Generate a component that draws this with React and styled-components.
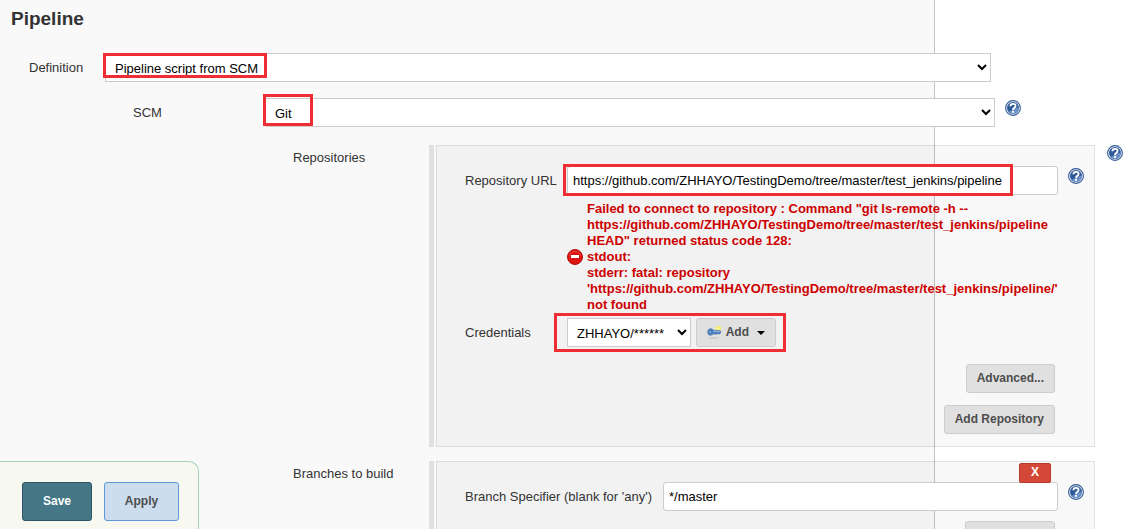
import React from 'react';
import styled, { createGlobalStyle } from 'styled-components';

const GlobalStyle = createGlobalStyle`
  *, *::before, *::after { box-sizing: border-box; }
  body {
    margin: 0;
    background: #fff;
    color: #333;
    font-family: "Liberation Sans", Arial, sans-serif;
    font-size: 13px;
    line-height: 16px;
  }
`;

const Page = styled.form`
  position: relative;
  height: 100vh;
  overflow: hidden;
  padding-top: 7px;
  background: linear-gradient(to right, #f9f9f9 calc(100% - 202px), #c3c3c3 calc(100% - 202px), #c3c3c3 calc(100% - 201px), #fff calc(100% - 201px));
`;

const Title = styled.h1`
  margin: 0 0 22px;
  padding-left: 11px;
  font-size: 19px;
  line-height: 24px;
`;

const Row = styled.div`
  display: flex;
  align-items: flex-start;
  padding-left: ${(p) => p.$start}px;
  padding-right: ${(p) => p.$end}px;
  margin-bottom: ${(p) => p.$gap}px;
`;

const Label = styled.label`
  flex: none;
  width: ${(p) => p.$width}px;
  line-height: ${(p) => p.$line || 29}px;
  white-space: nowrap;
`;

const Field = styled.div`
  position: relative;
  flex: 1;
  min-width: 0;
  display: flex;
`;

const Select = styled.select`
  width: ${(p) => p.$width || '100%'};
  height: 29px;
  padding: 2px 0 0 5px;
  border: 1px solid #ccc;
  border-radius: 0;
  background-color: #fff;
  color: #000;
  font: 13px "Liberation Sans", Arial, sans-serif;
`;

const Input = styled.input`
  width: 100%;
  height: 29px;
  padding: 0 5px;
  border: 1px solid #ccc;
  border-radius: 3px;
  background: #fff;
  color: #000;
  font: 13px "Liberation Sans", Arial, sans-serif;
`;

const Highlight = styled.span`
  position: absolute;
  top: ${(p) => p.$top}px;
  left: ${(p) => p.$left}px;
  width: ${(p) => p.$width}px;
  height: ${(p) => p.$height}px;
  border: 3px solid #ef2d35;
  pointer-events: none;
`;

const HelpButton = styled.button`
  flex: none;
  display: block;
  width: 16px;
  height: 16px;
  margin: ${(p) => p.$top || 0}px 0 0 10px;
  padding: 0;
  border: 0;
  background: none;
`;

const Group = styled.fieldset`
  position: relative;
  flex: 1;
  min-width: 0;
  margin: 0 2px 0 7px;
  padding: 20px 10px 12px 28px;
  border: 1px solid rgba(0, 0, 0, 0.12);
  background: rgba(0, 0, 0, 0.027);
  background-clip: padding-box;

  &::before {
    content: "";
    position: absolute;
    top: -1px;
    bottom: -1px;
    left: -8px;
    width: 5px;
    background: #e0e0e0;
  }
`;

const ErrorMessage = styled.div`
  display: flex;
  align-items: center;
  gap: 4px;
  padding: 6px 0 5px 102px;
  color: #c00;
  font-weight: bold;
  white-space: nowrap;
`;

const Button = styled.button`
  height: 29px;
  padding: 0 10px 2px;
  border: 1px solid #ccc;
  border-radius: 3px;
  background: #e0e0e0;
  color: #4d4d4d;
  font: bold 12px "Liberation Sans", Arial, sans-serif;
`;

const AddButton = styled(Button)`
  display: flex;
  align-items: center;
  gap: 4px;
  width: 80px;
  margin-left: 5px;
`;

const Caret = styled.span`
  margin: 2px 0 0 4px;
  border: 4px solid transparent;
  border-top-color: #000;
  border-bottom: 0;
`;

const DeleteButton = styled(Button)`
  position: absolute;
  top: 1px;
  right: 43px;
  width: 32px;
  height: 20px;
  border-color: #b83a2b;
  background: #d34836;
  color: #fff;
  border-radius: 2px;
`;

const Actions = styled.div`
  display: flex;
  flex-direction: column;
  align-items: flex-end;
  gap: 12px;
  padding-right: 29px;
  margin-top: ${(p) => p.$top}px;
`;

const MoreButton = styled(Button)`
  width: 90px;
`;

const SaveBar = styled.div`
  position: fixed;
  left: 0;
  bottom: 0;
  display: flex;
  gap: 12px;
  padding: 20px 19px 8px 22px;
  border: 1px solid #a5d0b5;
  border-width: 1px 1px 0 0;
  border-radius: 0 10px 0 0;
  background: #f7f8f0;
`;

const SaveButton = styled(Button)`
  height: 39px;
  width: 70px;
  border-color: #2c5364;
  background: #457787;
  color: #fff;
`;

const ApplyButton = styled(Button)`
  height: 39px;
  width: 75px;
  border-color: #5e98d9;
  background: #ccdded;
`;

function Help({ top, name }) {
  return (
    <HelpButton type="button" $top={top} aria-label={`Help for ${name}`}>
      <svg width="16" height="16" viewBox="0 0 16 16">
        <circle cx="8" cy="8" r="7.4" fill="#f4f7fb" stroke="#315a94" strokeWidth="1.1" />
        <circle cx="8" cy="8" r="6" fill="#2f5a98" />
        <path d="M3.6 12 A6 6 0 0 0 14 7.4 Q10 8 3.6 12Z" fill="#6d92c6" />
        <path d="M5.4 6.3Q5.4 3.8 8 3.8T10.6 6Q10.6 7.2 9.3 7.9T8 10" fill="none" stroke="#fff" strokeWidth="1.8" />
        <rect x="7" y="11" width="2" height="1.8" fill="#fff" />
      </svg>
    </HelpButton>
  );
}

function StopIcon() {
  return (
    <svg width="16" height="16" viewBox="0 0 16 16" aria-hidden="true">
      <circle cx="8" cy="8" r="7.5" fill="#dc1414" stroke="#b80d0d" />
      <path d="M2.4 7A5.7 5.7 0 0 1 13.6 7" fill="none" stroke="#ea4545" />
      <rect x="4" y="6" width="8" height="3" fill="#fff" />
    </svg>
  );
}

function KeyIcon() {
  return (
    <svg width="16" height="16" viewBox="0 0 16 16" aria-hidden="true">
      <ellipse cx="7.5" cy="14.5" rx="6" ry="1" fill="#cbcbcb" />
      <circle cx="12.5" cy="4" r="2.9" fill="#f5ea62" />
      <circle cx="12.5" cy="4" r="1.2" fill="#fffbc8" />
      <path d="M1 6Q3.5 3 6.5 5.3L7.5 6.5H14.2L15.2 8L14 10.2H12.6L11.6 9.5L10.6 10.4H9L7.5 10Q4.5 12.5 1.8 11Q0 8.8 1 6Z" fill="#4b7fbd" stroke="#3a6aa5" strokeWidth=".6" />
      <path d="M7 7.6H14.2" stroke="#9bbde0" />
      <circle cx="3.2" cy="8" r="1" fill="#8db3dd" />
    </svg>
  );
}

export default function App() {
  return (
    <>
      <GlobalStyle />
      <Page onSubmit={(e) => e.preventDefault()}>
        <Title>Pipeline</Title>
        <Row $start={29} $end={145} $gap={16}>
          <Label htmlFor="definition" $width={76}>Definition</Label>
          <Field>
            <Select id="definition"><option>Pipeline script from SCM</option></Select>
            <Highlight $top={0} $left={-2} $width={164} $height={25} />
          </Field>
        </Row>
        <Row $start={133} $end={115} $gap={18}>
          <Label htmlFor="scm" $width={132}>SCM</Label>
          <Field>
            <Select id="scm"><option>Git</option></Select>
            <Highlight $top={-4} $left={-2} $width={50} $height={32} />
          </Field>
          <Help top={2} name="SCM" />
        </Row>

        <Row $start={293} $end={13} $gap={14}>
          <Label as="span" $width={136} $line={25}>Repositories</Label>
          <Group aria-label="Repositories">
            <Row $start={0} $end={0} $gap={0}>
              <Label htmlFor="url" $width={102}>Repository URL</Label>
              <Field>
                <Input id="url" defaultValue="https://github.com/ZHHAYO/TestingDemo/tree/master/test_jenkins/pipeline" />
                <Highlight $top={-2} $left={-4} $width={450} $height={32} />
              </Field>
              <Help top={2} name="Repository URL" />
            </Row>
            <ErrorMessage role="alert">
              <StopIcon />
              <span>
                Failed to connect to repository : Command "git ls-remote -h --<br />
                https://github.com/ZHHAYO/TestingDemo/tree/master/test_jenkins/pipeline<br />
                HEAD" returned status code 128:<br />
                stdout:<br />
                stderr: fatal: repository<br />
                'https://github.com/ZHHAYO/TestingDemo/tree/master/test_jenkins/pipeline/'<br />
                not found
              </span>
            </ErrorMessage>
            <Row $start={0} $end={0} $gap={0}>
              <Label htmlFor="credentials" $width={102}>Credentials</Label>
              <Field>
                <Select id="credentials" $width="124px"><option>ZHHAYO/******</option></Select>
                <AddButton type="button">
                  <KeyIcon />
                  Add
                  <Caret />
                </AddButton>
                <Highlight $top={-5} $left={-13} $width={232} $height={39} />
              </Field>
            </Row>
            <Actions $top={17}>
              <Button type="button">Advanced...</Button>
              <Button type="button">Add Repository</Button>
            </Actions>
          </Group>
          <Help name="Repositories" />
        </Row>

        <Row $start={293} $end={39} $gap={0}>
          <Label as="span" $width={136} $line={25}>Branches to build</Label>
          <Group aria-label="Branches to build">
            <Row $start={0} $end={0} $gap={0}>
              <Label htmlFor="branch" $width={198}>Branch Specifier (blank for 'any')</Label>
              <Field>
                <Input id="branch" defaultValue="*/master" />
              </Field>
              <Help top={2} name="Branch Specifier" />
            </Row>
            <DeleteButton type="button">X</DeleteButton>
            <Actions $top={10}>
              <MoreButton type="button" aria-label="Add Branch" />
            </Actions>
          </Group>
        </Row>

        <SaveBar>
          <SaveButton type="submit">Save</SaveButton>
          <ApplyButton type="button">Apply</ApplyButton>
        </SaveBar>
      </Page>
    </>
  );
}
